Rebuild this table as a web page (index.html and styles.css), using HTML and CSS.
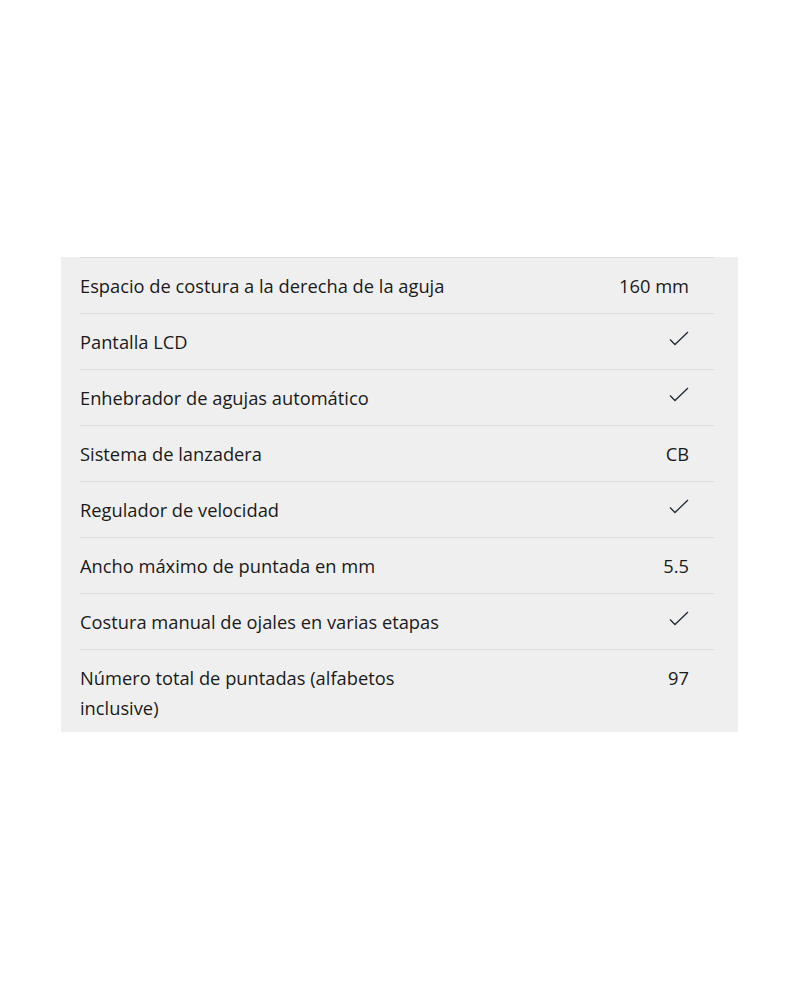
FILE: index.html
```html
<!DOCTYPE html>
<html lang="es">
<head>
<meta charset="utf-8">
<title>Especificaciones</title>
<link rel="stylesheet" href="styles.css">
</head>
<body>
<div class="page">
  <section class="specs">
    <div class="row"><div class="label">Espacio de costura a la derecha de la aguja</div><div class="value">160 mm</div></div>
    <div class="row"><div class="label">Pantalla LCD</div><div class="value"><svg class="check" viewBox="0 0 20 16" width="20" height="16"><path d="M1 8.5 L6 13.5 L19 1" fill="none" stroke="#1f2a36" stroke-width="1.3"/></svg></div></div>
    <div class="row"><div class="label">Enhebrador de agujas automático</div><div class="value"><svg class="check" viewBox="0 0 20 16" width="20" height="16"><path d="M1 8.5 L6 13.5 L19 1" fill="none" stroke="#1f2a36" stroke-width="1.3"/></svg></div></div>
    <div class="row"><div class="label">Sistema de lanzadera</div><div class="value">CB</div></div>
    <div class="row"><div class="label">Regulador de velocidad</div><div class="value"><svg class="check" viewBox="0 0 20 16" width="20" height="16"><path d="M1 8.5 L6 13.5 L19 1" fill="none" stroke="#1f2a36" stroke-width="1.3"/></svg></div></div>
    <div class="row"><div class="label">Ancho máximo de puntada en mm</div><div class="value">5.5</div></div>
    <div class="row"><div class="label">Costura manual de ojales en varias etapas</div><div class="value"><svg class="check" viewBox="0 0 20 16" width="20" height="16"><path d="M1 8.5 L6 13.5 L19 1" fill="none" stroke="#1f2a36" stroke-width="1.3"/></svg></div></div>
    <div class="row last"><div class="label">Número total de puntadas (alfabetos inclusive)</div><div class="value">97</div></div>
  </section>
</div>
</body>
</html>
```
FILE: styles.css
```css
html, body {
  margin: 0;
  padding: 0;
  background: #ffffff;
}
body {
  font-family: "Open Sans", "Noto Sans", sans-serif;
  color: #1a1a1a;
}
.page {
  padding: 257px 62px 0 61px;
}
.specs {
  background: #efefef;
  padding: 0 24px 0 19px;
  width: 634px;
}
.row {
  display: flex;
  justify-content: space-between;
  align-items: flex-start;
  border-top: 1px solid #dcdcdc;
  padding: 13px 25px 12px 0;
  font-size: 18.3px;
  line-height: 30px;
}
.row.last {
  padding-bottom: 9px;
}
.label {
  max-width: 380px;
}
.value {
  text-align: right;
  display: flex;
  justify-content: flex-end;
  align-items: center;
  height: 30px;
}
.check {
  display: block;
  margin-top: -6px;
}
```
